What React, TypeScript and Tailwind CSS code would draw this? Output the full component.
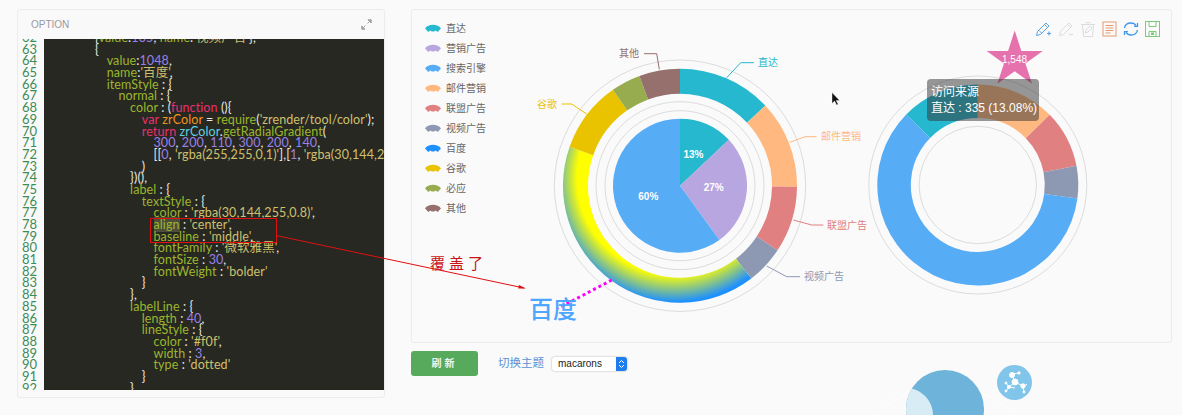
const CJK = "font-['Liberation_Sans','Noto_Sans_CJK_SC',sans-serif]";

const codeLines: [number, number, string][] = [
  [62, 0, "{value:135, name:'视频广告'},"],
  [63, 0, "{"],
  [64, 1, "value:1048,"],
  [65, 1, "name:'百度',"],
  [66, 1, "itemStyle : {"],
  [67, 2, "normal : {"],
  [68, 3, "color : (function (){"],
  [69, 4, "var zrColor = require('zrender/tool/color');"],
  [70, 4, "return zrColor.getRadialGradient("],
  [71, 5, "300, 200, 110, 300, 200, 140,"],
  [72, 5, "[[0, 'rgba(255,255,0,1)'],[1, 'rgba(30,144,255,0.8)']]"],
  [73, 4, ")"],
  [74, 3, "})(),"],
  [75, 3, "label : {"],
  [76, 4, "textStyle : {"],
  [77, 5, "color : 'rgba(30,144,255,0.8)',"],
  [78, 5, "align : 'center',"],
  [79, 5, "baseline : 'middle',"],
  [80, 5, "fontFamily : '微软雅黑',"],
  [81, 5, "fontSize : 30,"],
  [82, 5, "fontWeight : 'bolder'"],
  [83, 4, "}"],
  [84, 3, "},"],
  [85, 3, "labelLine : {"],
  [86, 4, "length : 40,"],
  [87, 4, "lineStyle : {"],
  [88, 5, "color : '#f0f',"],
  [89, 5, "width : 3,"],
  [90, 5, "type : 'dotted'"],
  [91, 4, "}"],
  [92, 3, "}"],
];

const tokenRe = /'[^']*'|\b\d+\b|\b(?:var|function|return)\b|zrColor|[A-Za-z]+|[^'\w]+/g;

function tokenClass(tok: string, next: string) {
  if (tok[0] === "'") return "text-[#cfc06e]";
  if (/^\d/.test(tok)) return "text-[#9a80e6]";
  if (tok === "var" || tok === "function" || tok === "return") return "text-[#e8306e]";
  if (tok === "zrColor") return next[0] === "." ? "text-[#62cfe0]" : "text-[#f2931e]";
  if (/^[A-Za-z]/.test(tok)) return "text-[#9cb62c]";
  return "text-[#ebebe4]";
}

function CodeLine({ text, no }: { text: string; no: number }) {
  const toks = text.match(tokenRe) || [];
  return (
    <>
      {toks.map((t, i) => (
        <span
          key={i}
          className={`${tokenClass(t, toks[i + 1] || "")} ${no === 78 && t === "align" ? "bg-[#4c4e3a]" : ""}`}
        >
          {t}
        </span>
      ))}
    </>
  );
}

function polar(cx: number, cy: number, r: number, deg: number) {
  const a = (deg * Math.PI) / 180;
  return [cx + r * Math.sin(a), cy - r * Math.cos(a)];
}

function slice(cx: number, cy: number, r0: number, r1: number, a0: number, a1: number) {
  const big = a1 - a0 > 180 ? 1 : 0;
  const [x1, y1] = polar(cx, cy, r1, a0);
  const [x2, y2] = polar(cx, cy, r1, a1);
  if (r0 === 0) return `M${cx} ${cy}L${x1} ${y1}A${r1} ${r1} 0 ${big} 1 ${x2} ${y2}Z`;
  const [x3, y3] = polar(cx, cy, r0, a1);
  const [x4, y4] = polar(cx, cy, r0, a0);
  return `M${x1} ${y1}A${r1} ${r1} 0 ${big} 1 ${x2} ${y2}L${x3} ${y3}A${r0} ${r0} 0 ${big} 0 ${x4} ${y4}Z`;
}

function starPoints(cx: number, cy: number, r: number) {
  const pts: string[] = [];
  for (let i = 0; i < 10; i++) {
    const [x, y] = polar(cx, cy, i % 2 ? r * 0.382 : r, i * 36);
    pts.push(`${x},${y}`);
  }
  return pts.join(" ");
}

const legend = [
  ["直达", "#26b8cf"],
  ["营销广告", "#b8a6e0"],
  ["搜索引擎", "#56acf5"],
  ["邮件营销", "#ffb980"],
  ["联盟广告", "#e08080"],
  ["视频广告", "#8d98b3"],
  ["百度", "#1e90ff"],
  ["谷歌", "#e9c300"],
  ["必应", "#97ab4f"],
  ["其他", "#95706d"],
];

const outerSlices: [number, number, string][] = [
  [0, 46.8, "#26b8cf"],
  [46.8, 90.5, "#ffb980"],
  [90.5, 123.5, "#e08080"],
  [123.5, 142.5, "#8d98b3"],
  [142.5, 289.4, "url(#baidu)"],
  [289.4, 325, "#e9c300"],
  [325, 339.7, "#97ab4f"],
  [339.7, 360, "#95706d"],
];

const pieSlices: [number, number, string][] = [
  [0, 46.8, "#26b8cf"],
  [46.8, 144, "#b8a6e0"],
  [144, 360, "#56acf5"],
];

const rightSlices: [number, number, string][] = [
  [314.6, 360, "#26b8cf"],
  [0, 45.7, "#ffb980"],
  [45.7, 79, "#e08080"],
  [79, 97.7, "#8d98b3"],
  [97.7, 314.6, "#56acf5"],
];

const labels: [string, string, string, number, number, "start" | "end"][] = [
  ["直达", "#26b8cf", "M726.7 77.7L740.7 62.7H754", 758, 62.5, "start"],
  ["邮件营销", "#ffb980", "M790 142.3L805 136.7H816.7", 821, 136.7, "start"],
  ["联盟广告", "#e08080", "M793.3 220L811.7 225H823.3", 827, 225, "start"],
  ["视频广告", "#8d98b3", "M766.7 266L786.7 276.7H800", 804, 276.7, "start"],
  ["谷歌", "#e9c300", "M586.7 114L571.7 104H561.7", 557, 104, "end"],
  ["其他", "#95706d", "M659.3 69.3L656.7 53.7H644", 639, 53.7, "end"],
];

function Toolbox() {
  return (
    <div className="absolute right-[11px] top-[11px] flex items-center gap-[6px]">
      <svg width="17" height="16" viewBox="0 0 17 16" fill="none" stroke="#5aa4e6" strokeWidth="1">
        <path d="M1.5 14.5l1-4L11 2l3 3-8.5 8.5z M9.5 3.5l3 3 M4 9.5l2.5 2.5" />
        <path d="M12 12.5h4M14 10.5v4" strokeWidth="1.2" />
      </svg>
      <svg width="16" height="16" viewBox="0 0 16 16" fill="none" stroke="#dcdcdc" strokeWidth="1">
        <path d="M1.5 14.5l1-4L11 2l3 3-8.5 8.5z M9.5 3.5l3 3" />
        <path d="M11 13.5h4" strokeWidth="1.2" />
      </svg>
      <svg width="16" height="16" viewBox="0 0 16 16" fill="none" stroke="#dcdcdc" strokeWidth="1">
        <path d="M1 3.5h14M5.5 3.5l1-2h3l1 2M2.5 3.5l1 12h9l1-12" />
        <path d="M5 12l1-3 4-4 2 2-4 4z" />
      </svg>
      <svg width="15" height="16" viewBox="0 0 15 16" fill="none" stroke="#e59a6e" strokeWidth="1">
        <rect x="1" y="1" width="13" height="14" />
        <path d="M3.5 4.5h8M3.5 7h8M3.5 9.5h8M3.5 12h5" />
      </svg>
      <svg width="16" height="16" viewBox="0 0 16 16" fill="none" stroke="#3f97ea" strokeWidth="1.3">
        <path d="M1.5 7C2 4 4.8 2 8 2c2.2 0 4 1 5 2.6" />
        <path d="M14.5 2v3.4h-3.4" />
        <path d="M14.5 9c-.5 3-3.3 5-6.5 5-2.2 0-4-1-5-2.6" />
        <path d="M1.5 14v-3.4h3.4" />
      </svg>
      <svg width="15" height="16" viewBox="0 0 15 16" fill="none" stroke="#7ccb7c" strokeWidth="1">
        <rect x="0.5" y="0.5" width="14" height="15" />
        <path d="M4 .5v5h7v-5M4 15.5v-5h7v5" />
        <rect x="6.5" y="12" width="2" height="1.5" fill="#7ccb7c" />
      </svg>
    </div>
  );
}

function Charts() {
  return (
    <svg viewBox="500 10 672 333" className="h-[333px] w-[672px] shrink-0">
      <defs>
        <radialGradient id="baidu" gradientUnits="userSpaceOnUse" cx="674" cy="178" r="124">
          <stop offset="0.78" stopColor="#ffff00" />
          <stop offset="1" stopColor="#1e90ff" />
        </radialGradient>
      </defs>

      <g fill="none" stroke="#dcdcdc">
        <circle cx="680" cy="185.7" r="125.7" />
        <circle cx="680" cy="185.7" r="84" />
        <circle cx="680" cy="185.7" r="75" />
        <circle cx="977.8" cy="185" r="109" />
        <circle cx="977.8" cy="185" r="58.7" />
      </g>

      {outerSlices.map(([a, b, c]) => (
        <path key={a} d={slice(680, 185.7, 92, 117, a, b)} fill={c} />
      ))}
      {pieSlices.map(([a, b, c]) => (
        <path key={a} d={slice(680, 185.7, 0, 67, a, b)} fill={c} />
      ))}
      {rightSlices.map(([a, b, c]) => (
        <path key={a} d={slice(977.8, 185, 67, 100.5, a, b)} fill={c} />
      ))}

      <g fontSize="10" fontFamily="'Liberation Sans','Noto Sans CJK SC',sans-serif" dominantBaseline="central">
        {labels.map(([t, c, d, x, y, anchor]) => (
          <g key={t}>
            <path d={d} fill="none" stroke={c} />
            <text x={x} y={y} fill={c} textAnchor={anchor}>
              {t}
            </text>
          </g>
        ))}
      </g>

      <g
        fontSize="10"
        fontWeight="bold"
        fill="#fff"
        textAnchor="middle"
        dominantBaseline="central"
        fontFamily="'Liberation Sans',sans-serif"
      >
        <text x="693.5" y="154.5">13%</text>
        <text x="713.7" y="187.7">27%</text>
        <text x="648.3" y="196">60%</text>
      </g>

      <path d="M611.7 280L558.3 308.3" stroke="#f0f" strokeWidth="3" strokeDasharray="3 3" fill="none" />
      <text
        x="529"
        y="307"
        fontSize="24"
        fontWeight="500"
        fill="#4da6ff"
        dominantBaseline="central"
        fontFamily="'Noto Sans CJK SC',sans-serif"
      >
        百度
      </text>

      <polygon points={starPoints(1014.7, 60, 29.5)} fill="#e672ad" />
      <text
        x="1014.5"
        y="59.5"
        fontSize="10"
        fill="#fff"
        textAnchor="middle"
        dominantBaseline="central"
        fontFamily="'Liberation Sans',sans-serif"
      >
        1,548
      </text>

      <path d="M832 92.5v11l2.6-2.4 2 4 1.6-.8-2-3.8h3.4z" fill="#111" stroke="#fff" strokeWidth="0.4" />
    </svg>
  );
}

export default function App() {
  return (
    <div className={`relative flex h-[415px] w-[1182px] items-start overflow-hidden bg-[#fafafb] pl-[17px] pt-[9px] ${CJK}`}>
      {/* code panel */}
      <div className="flex h-[389px] w-[368px] shrink-0 flex-col rounded-[3px] border border-[#ececec] bg-[#f9f9fa]">
        <div className="flex h-[29px] shrink-0 items-center justify-between pl-[13px] pr-[12px]">
          <span className="text-[10px] text-[#9a9a9a]">OPTION</span>
          <svg width="11" height="11" viewBox="0 0 11 11" fill="none" stroke="#a0a0a0" strokeWidth="1">
            <path d="M3 8l1.500-1.500M6.500 4.500L8 3" />
            <path d="M7 .8h3.200V4zM.8 7v3.200H4z" fill="#a0a0a0" />
          </svg>
        </div>
        <div className="flex h-[351px] overflow-hidden">
          <div className="-mt-[7px] w-[26px] shrink-0 pl-[4px] font-['Lato',sans-serif] text-[13px] leading-[11.69px] text-[#3c8c55]">
            {codeLines.map(([no]) => (
              <div key={no} className="h-[11.69px]">
                {no}
              </div>
            ))}
          </div>
          <div className="min-w-0 flex-1 overflow-hidden bg-[#272822] pl-[51px]">
            <div className="-mt-[7px] font-['Lato','Noto_Sans_CJK_SC',sans-serif] text-[12.5px] leading-[11.69px]">
              {codeLines.map(([no, indent, text]) => (
                <div
                  key={no}
                  className="h-[11.69px] whitespace-pre tracking-[0.1px]"
                  style={{ paddingLeft: indent * 11.7 }}
                >
                  <CodeLine text={text} no={no} />
                </div>
              ))}
            </div>
          </div>
        </div>
      </div>

      {/* chart column */}
      <div className="ml-[26px] flex w-[761px] shrink-0 flex-col">
        <div className="relative flex h-[334px] rounded-[3px] border border-[#ececec] bg-[#fafafb]">
          <ul className="flex w-[88px] shrink-0 flex-col gap-[4.1px] pl-[13px] pt-[10px]">
            {legend.map(([name, color]) => (
              <li key={name} className="flex h-[16px] items-center gap-[5px] text-[10px] text-[#666]">
                <svg width="16" height="9" viewBox="0 0 16 9">
                  <path
                    d="M0 4.500C3 -.5 13 -.5 16 4.500c-1 1-2 2-3.200 3.500-.9-1-1.800-1.300-2.800-1.300-.6 1.200-3.400 1.200-4 0-1 0-1.900.3-2.800 1.300C2 6.500 1 5.500 0 4.500z"
                    fill={color}
                  />
                </svg>
                {name}
              </li>
            ))}
          </ul>
          <Charts />
          <Toolbox />
          <div className="absolute left-[515px] top-[69px] flex h-[42px] w-[112px] flex-col justify-center whitespace-nowrap rounded-[4px] bg-[#323232]/50 pl-[4px] text-[12px] leading-[16.5px] text-white">
            <span>访问来源</span>
            <span>直达 : 335 (13.08%)</span>
          </div>
        </div>

        <div className="mt-[8px] flex items-center">
          <button className="h-[25px] w-[67px] rounded-[3px] bg-[#57a95c] text-[10px] font-bold tracking-[3px] text-[#eef6ee]">
            刷新
          </button>
          <span className="ml-[20px] text-[11.500px] text-[#5b93d3]">切换主题</span>
          <div className="ml-[8px] flex h-[14px] w-[75px] items-center overflow-hidden rounded-[3px] bg-white shadow-[0_0_2px_rgba(0,0,0,0.35)]">
            <span className="flex-1 pl-[6px] text-[10px] text-[#222]">macarons</span>
            <span className="flex h-full w-[11px] items-center justify-center bg-[#1f7dee]">
              <svg width="7" height="10" viewBox="0 0 7 10" fill="none" stroke="#fff" strokeWidth="1">
                <path d="M1 4l2.500-2.500L6 4M1 6l2.500 2.500L6 6" />
              </svg>
            </span>
          </div>
        </div>
      </div>

      {/* floating bubbles */}
      <div className="absolute left-[850px] top-[385px] h-[190px] w-[190px] rounded-full border border-white" />
      <div className="absolute left-[906px] top-[370px] h-[78px] w-[78px] overflow-hidden rounded-full bg-[#6db3da]">
        <div className="absolute -left-[27px] top-[18px] h-[54px] w-[54px] rounded-full bg-[#d8ecf6]" />
      </div>
      <div className="absolute left-[996.500px] top-[365px] flex h-[35px] w-[35px] items-center justify-center rounded-full bg-[#82c5ea]">
        <svg width="26" height="28" viewBox="0 0 26 28" stroke="#fff" fill="#fff" strokeWidth="1">
          <path d="M11 6l3 7M11 5l7-1M14 13l8 4M22 17l5-2M22 17l1 6M14 13l-6 5M8 18l-3-4M8 18l-3 4M8 18l6 1" fill="none" />
          <circle cx="11" cy="6" r="2.500" />
          <circle cx="18" cy="4" r="1.200" />
          <circle cx="14" cy="13" r="3" />
          <circle cx="22" cy="17" r="2.200" />
          <circle cx="23" cy="23" r="1" />
          <circle cx="8" cy="18" r="1.500" />
          <circle cx="5" cy="14" r="1" />
          <circle cx="5" cy="22" r="1" />
        </svg>
      </div>

      {/* hand-drawn annotation over the screenshot */}
      <div className="absolute left-[150px] top-[218px] h-[25px] w-[127px] border border-[#e01010]" />
      <svg className="pointer-events-none absolute left-0 top-0" width="1182" height="415">
        <path d="M276 235.500L524 288" stroke="#e01010" fill="none" />
        <path d="M526 288.500l-7-3.500-.8 3.600z" fill="#e01010" />
      </svg>
      <span className="absolute left-[430px] top-[254px] font-['Liberation_Serif','Noto_Sans_CJK_SC',serif] text-[15px] leading-[20px] tracking-[4px] text-[#c81414]">
        覆盖了
      </span>
    </div>
  );
}
